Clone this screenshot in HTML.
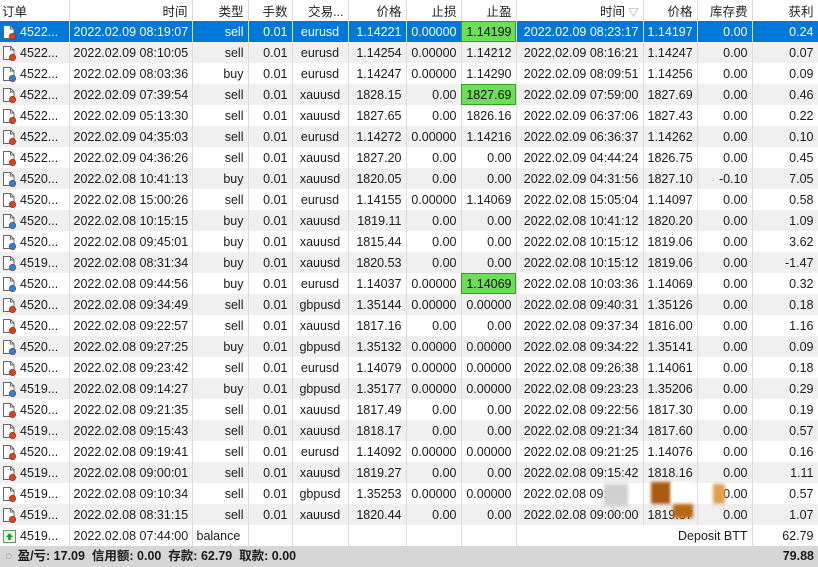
<!DOCTYPE html><html><head><meta charset="utf-8"><style>
body{margin:0;width:818px;height:567px;overflow:hidden;background:#fff;font-family:"Liberation Sans","Noto Sans CJK SC",sans-serif;font-size:12.5px;color:#1a1a1a}
table{border-collapse:collapse;table-layout:fixed;width:818px}
td,th{height:21px;padding:0 4px;white-space:nowrap;overflow:hidden;border-right:1px solid #dcdcdc;text-align:right;box-sizing:border-box;font-weight:normal}
th{height:21px;background:#fff;color:#222}
tr.g td{background:#f0f0f0}
tr.s td{background:#0078d7;color:#fff}
td.tp{background:#6ede5a!important;color:#111!important;outline:1px solid #3a9a2a;outline-offset:-1px}
td:first-child,th:first-child{text-align:left;padding-left:2px}
td:nth-child(5){text-align:center}
.ic{display:inline-block;vertical-align:-4px;margin-right:3px}
#st{position:absolute;left:0;top:546px;width:818px;height:21px;background:#d6d6d6;font-weight:bold;line-height:21px;font-size:12.5px}
.bl{position:absolute;filter:blur(1.5px)}
</style></head><body>
<svg width="0" height="0" style="position:absolute"><defs>
<g id="d"><path d="M1.5 1.5h7l3.5 3.5v9.5h-10.5z" fill="#fff" stroke="#666"/><path d="M8.5 1.5v3.5h3.5" fill="none" stroke="#666"/></g>
</defs></svg>
<table>
<colgroup><col width="69"><col width="123"><col width="56"><col width="44"><col width="56"><col width="58"><col width="55"><col width="55"><col width="127"><col width="54"><col width="55"><col width="66"></colgroup>
<tr><th>订单</th><th>时间</th><th>类型</th><th>手数</th><th>交易...</th><th>价格</th><th>止损</th><th>止盈</th><th>时间 <span style="color:#888;font-size:10px">▽</span></th><th>价格</th><th>库存费</th><th>获利</th></tr>
<tbody id="b"></tbody>
</table>
<div class="bl" style="left:604px;top:484px;width:24px;height:22px;background:#d0d0d0"></div>
<div class="bl" style="left:651px;top:482px;width:20px;height:22px;background:#a85a10"></div>
<div class="bl" style="left:671px;top:482px;width:22px;height:22px;background:#fff"></div>
<div class="bl" style="left:673px;top:504px;width:20px;height:14px;background:#b8680f"></div>
<div class="bl" style="left:713px;top:484px;width:12px;height:20px;background:#e0a050"></div>
<div id="st"><span style="color:#999;font-weight:normal;margin:0 5px 0 5px">○</span>盈/亏: 17.09&nbsp; 信用额: 0.00&nbsp; 存款: 62.79&nbsp; 取款: 0.00<span style="position:absolute;right:4px">79.88</span></div>
<script>
var R=[
["4522...","2022.02.09 08:19:07","sell","eurusd","1.14221","0.00000","1.14199","2022.02.09 08:23:17","1.14197","0.00","0.24"],
["4522...","2022.02.09 08:10:05","sell","eurusd","1.14254","0.00000","1.14212","2022.02.09 08:16:21","1.14247","0.00","0.07"],
["4522...","2022.02.09 08:03:36","buy","eurusd","1.14247","0.00000","1.14290","2022.02.09 08:09:51","1.14256","0.00","0.09"],
["4522...","2022.02.09 07:39:54","sell","xauusd","1828.15","0.00","1827.69","2022.02.09 07:59:00","1827.69","0.00","0.46"],
["4522...","2022.02.09 05:13:30","sell","xauusd","1827.65","0.00","1826.16","2022.02.09 06:37:06","1827.43","0.00","0.22"],
["4522...","2022.02.09 04:35:03","sell","eurusd","1.14272","0.00000","1.14216","2022.02.09 06:36:37","1.14262","0.00","0.10"],
["4522...","2022.02.09 04:36:26","sell","xauusd","1827.20","0.00","0.00","2022.02.09 04:44:24","1826.75","0.00","0.45"],
["4520...","2022.02.08 10:41:13","buy","xauusd","1820.05","0.00","0.00","2022.02.09 04:31:56","1827.10","-0.10","7.05"],
["4520...","2022.02.08 15:00:26","sell","eurusd","1.14155","0.00000","1.14069","2022.02.08 15:05:04","1.14097","0.00","0.58"],
["4520...","2022.02.08 10:15:15","buy","xauusd","1819.11","0.00","0.00","2022.02.08 10:41:12","1820.20","0.00","1.09"],
["4520...","2022.02.08 09:45:01","buy","xauusd","1815.44","0.00","0.00","2022.02.08 10:15:12","1819.06","0.00","3.62"],
["4519...","2022.02.08 08:31:34","buy","xauusd","1820.53","0.00","0.00","2022.02.08 10:15:12","1819.06","0.00","-1.47"],
["4520...","2022.02.08 09:44:56","buy","eurusd","1.14037","0.00000","1.14069","2022.02.08 10:03:36","1.14069","0.00","0.32"],
["4520...","2022.02.08 09:34:49","sell","gbpusd","1.35144","0.00000","0.00000","2022.02.08 09:40:31","1.35126","0.00","0.18"],
["4520...","2022.02.08 09:22:57","sell","xauusd","1817.16","0.00","0.00","2022.02.08 09:37:34","1816.00","0.00","1.16"],
["4520...","2022.02.08 09:27:25","buy","gbpusd","1.35132","0.00000","0.00000","2022.02.08 09:34:22","1.35141","0.00","0.09"],
["4520...","2022.02.08 09:23:42","sell","eurusd","1.14079","0.00000","0.00000","2022.02.08 09:26:38","1.14061","0.00","0.18"],
["4519...","2022.02.08 09:14:27","buy","gbpusd","1.35177","0.00000","0.00000","2022.02.08 09:23:23","1.35206","0.00","0.29"],
["4520...","2022.02.08 09:21:35","sell","xauusd","1817.49","0.00","0.00","2022.02.08 09:22:56","1817.30","0.00","0.19"],
["4519...","2022.02.08 09:15:43","sell","xauusd","1818.17","0.00","0.00","2022.02.08 09:21:34","1817.60","0.00","0.57"],
["4520...","2022.02.08 09:19:41","sell","eurusd","1.14092","0.00000","0.00000","2022.02.08 09:21:25","1.14076","0.00","0.16"],
["4519...","2022.02.08 09:00:01","sell","xauusd","1819.27","0.00","0.00","2022.02.08 09:15:42","1818.16","0.00","1.11"],
["4519...","2022.02.08 09:10:34","sell","gbpusd","1.35253","0.00000","0.00000","2022.02.08 09:1","","0.00","0.57"],
["4519...","2022.02.08 08:31:15","sell","xauusd","1820.44","0.00","0.00","2022.02.08 09:00:00","1819.37","0.00","1.07"]];
var tp={0:1,3:1,12:1},h="";
R.forEach(function(r,i){
var c=r[2]=="buy"?"#1e88e5":"#e04020";
var tc=i==22?' style="text-align:left;padding-left:7px"':'';
h+='<tr class="'+(i==0?'s':(i%2?'g':''))+'"><td><svg class="ic" width="15" height="16"><use href="#d"/><circle cx="10.5" cy="12.5" r="3.2" fill="'+c+'" stroke="#8a2a10" stroke-width=".6"/></svg>'+r[0]+'</td><td>'+r[1]+'</td><td>'+r[2]+'</td><td>0.01</td><td>'+r[3]+'</td><td>'+r[4]+'</td><td>'+r[5]+'</td><td'+(tp[i]?' class="tp"':'')+'>'+r[6]+'</td><td'+tc+'>'+r[7]+'</td><td>'+r[8]+'</td><td>'+r[9]+'</td><td>'+r[10]+'</td></tr>';});
h+='<tr><td><svg class="ic" width="15" height="16"><rect x="1.5" y="2.5" width="12" height="12" fill="#e8f5e8" stroke="#5a9a5a"/><path d="M7.5 5l-3.5 4h2.2v3h2.6v-3h2.2z" fill="#1a9a2a"/></svg>4519...</td><td>2022.02.08 07:44:00</td><td style="text-align:left">balance</td><td></td><td></td><td></td><td></td><td></td><td colspan="3" style="text-align:right">Deposit BTT</td><td>62.79</td></tr>';
document.getElementById("b").innerHTML=h;
</script>
</body></html>
